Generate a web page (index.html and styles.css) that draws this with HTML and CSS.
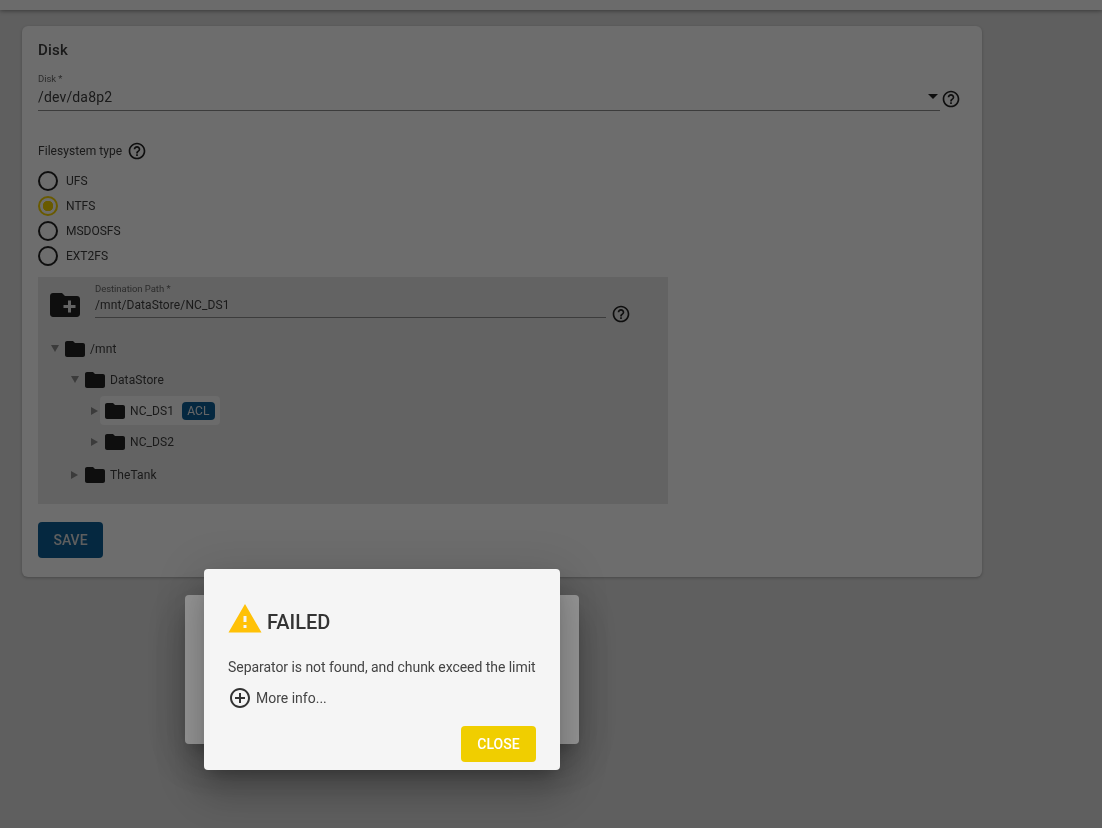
FILE: index.html
```html
<!DOCTYPE html>
<html lang="en">
<head>
<meta charset="utf-8">
<title>Disk</title>
<link rel="stylesheet" href="styles.css">
</head>
<body>
<svg class="defs" width="0" height="0" aria-hidden="true">
  <defs>
    <symbol id="help" viewBox="0 0 24 24"><path d="M11 18h2v-2h-2v2zm1-16C6.48 2 2 6.48 2 12s4.48 10 10 10 10-4.48 10-10S17.52 2 12 2zm0 18c-4.41 0-8-3.59-8-8s3.59-8 8-8 8 3.59 8 8-3.59 8-8 8zm0-14c-2.21 0-4 1.79-4 4h2c0-1.1.9-2 2-2s2 .9 2 2c0 2-3 1.75-3 5h2c0-2.25 3-2.5 3-5 0-2.21-1.79-4-4-4z"/></symbol>
    <symbol id="folder" viewBox="0 0 24 24"><path d="M10 4H4c-1.1 0-2 .9-2 2v12c0 1.1.9 2 2 2h16c1.1 0 2-.9 2-2V8c0-1.1-.9-2-2-2h-8l-2-2z"/></symbol>
  </defs>
</svg>
<header class="toolbar"></header>
<main class="content">
  <section class="card">
    <h2 class="card-title">Disk</h2>
    <div class="select-row">
      <div class="select-field">
        <label class="float-label">Disk *</label>
        <div class="select-value"><span>/dev/da8p2</span><i class="select-arrow"></i></div>
      </div>
      <svg class="help"><use href="#help"/></svg>
    </div>
    <div class="radio-title"><span>Filesystem type</span><svg class="help"><use href="#help"/></svg></div>
    <ul class="radios">
      <li class="radio"><i class="radio-dot"></i>UFS</li>
      <li class="radio radio-on"><i class="radio-dot"></i>NTFS</li>
      <li class="radio"><i class="radio-dot"></i>MSDOSFS</li>
      <li class="radio"><i class="radio-dot"></i>EXT2FS</li>
    </ul>
    <div class="explorer">
      <div class="path-row">
        <svg class="folder-add" viewBox="0 0 24 24"><path d="M20 6h-8l-2-2H4c-1.11 0-1.99.89-1.99 2L2 18c0 1.11.89 2 2 2h16c1.11 0 2-.89 2-2V8c0-1.11-.89-2-2-2zm-1 8h-3v3h-2v-3h-3v-2h3V9h2v3h3v2z"/></svg>
        <div class="path-field">
          <label class="float-label">Destination Path *</label>
          <div class="path-value">/mnt/DataStore/NC_DS1</div>
        </div>
        <svg class="help"><use href="#help"/></svg>
      </div>
      <ul class="tree">
        <li class="node level-0"><i class="caret caret-open"></i><svg class="folder"><use href="#folder"/></svg><span>/mnt</span></li>
        <li class="node level-1"><i class="caret caret-open"></i><svg class="folder"><use href="#folder"/></svg><span>DataStore</span></li>
        <li class="node level-2"><i class="caret"></i><div class="node-active"><svg class="folder"><use href="#folder"/></svg><span>NC_DS1</span><b class="acl">ACL</b></div></li>
        <li class="node level-2"><i class="caret"></i><div class="node-plain"><svg class="folder"><use href="#folder"/></svg><span>NC_DS2</span></div></li>
        <li class="node level-1 node-last"><i class="caret"></i><svg class="folder"><use href="#folder"/></svg><span>TheTank</span></li>
      </ul>
    </div>
    <button class="btn btn-save" type="button">SAVE</button>
  </section>
</main>
<div class="overlay overlay-one"></div>
<div class="dialog dialog-back"></div>
<div class="overlay overlay-two"></div>
<div class="dialog dialog-front">
  <div class="dialog-head">
    <svg class="warn" viewBox="0 0 24 24"><path d="M1 21h22L12 2 1 21zm12-3h-2v-2h2v2zm0-4h-2v-4h2v4z"/></svg>
    <h1 class="dialog-title">FAILED</h1>
  </div>
  <p class="dialog-msg">Separator is not found, and chunk exceed the limit</p>
  <div class="more">
    <svg class="more-icon" viewBox="0 0 24 24"><path d="M13 7h-2v4H7v2h4v4h2v-4h4v-2h-4V7zm-1-5C6.48 2 2 6.48 2 12s4.48 10 10 10 10-4.48 10-10S17.52 2 12 2zm0 18c-4.41 0-8-3.59-8-8s3.59-8 8-8 8 3.59 8 8-3.59 8-8 8z"/></svg>
    <span>More info...</span>
  </div>
  <div class="dialog-actions"><button class="btn btn-close" type="button">CLOSE</button></div>
</div>
</body>
</html>
```
FILE: styles.css
```css
* { box-sizing: border-box; }
html, body { height: 100%; }
body {
  margin: 0;
  background: #dadada;
  font-family: Roboto, "Liberation Sans", sans-serif;
  color: #3c3c3c;
  overflow: hidden;
}
.defs { position: absolute; }
ul { list-style: none; margin: 0; padding: 0; }
.toolbar {
  height: 10px;
  background: #f5f5f5;
  box-shadow: 0 1px 4px rgba(0,0,0,.4);
}
.content { padding: 16px 22px; will-change: transform; }
.card {
  width: 960px;
  height: 551px;
  padding: 16px;
  background: #fafafa;
  border-radius: 6px;
  box-shadow: 0 1px 3px rgba(0,0,0,.25);
}
.card-title {
  margin: 0;
  font-size: 15px;
  line-height: 16px;
  font-weight: 500;
  letter-spacing: .2px;
}
.select-row { display: flex; margin-top: 16px; }
.select-field { width: 902px; }
.float-label {
  display: block;
  font-size: 9.5px;
  line-height: 10px;
  letter-spacing: -.05px;
  color: #666;
}
.select-value {
  display: flex;
  align-items: center;
  justify-content: space-between;
  height: 27px;
  padding-right: 2px;
  border-bottom: 1px solid #8a8a8a;
  font-size: 14px;
  letter-spacing: .15px;
}
.select-arrow {
  width: 0;
  height: 0;
  margin-bottom: 2px;
  border: 5px solid transparent;
  border-top-color: #222;
  border-bottom-width: 0;
}
.help { width: 20px; height: 20px; fill: #222; flex: none; }
.select-row > .help { margin: 15px 0 0 1px; }
.radio-title {
  display: flex;
  align-items: center;
  gap: 5px;
  margin-top: 30px;
  height: 20px;
  font-size: 12px;
  letter-spacing: .05px;
}
.radios { margin-top: 7px; }
.radio {
  display: flex;
  align-items: center;
  height: 25px;
  gap: 8px;
  font-size: 12px;
}
.radio-dot {
  width: 20px;
  height: 20px;
  border: 2px solid #222;
  border-radius: 50%;
  flex: none;
}
.radio-on .radio-dot {
  border-color: #f0ce00;
  background: radial-gradient(circle, #f0ce00 0 5px, transparent 5.5px);
}
.explorer {
  width: 630px;
  height: 227px;
  margin-top: 9px;
  background: #e4e4e4;
}
.path-row { display: flex; align-items: flex-start; padding: 7px 0 0 9px; }
.folder-add { width: 36px; height: 36px; fill: #222; margin-top: 3px; flex: none; }
.path-field { width: 511px; margin-left: 12px; }
.path-value {
  height: 24px;
  line-height: 22px;
  border-bottom: 1px solid #8a8a8a;
  font-size: 12px;
  letter-spacing: .1px;
}
.path-row .help { margin: 20px 0 0 5px; }
.tree { padding-top: 9px; }
.node {
  display: flex;
  align-items: center;
  height: 31px;
  font-size: 12px;
  letter-spacing: .1px;
}
.node span { margin-left: 3px; }
.node.level-0 { padding-left: 13px; }
.node.level-1 { padding-left: 33px; }
.node.level-2 { padding-left: 53px; }
.node-last { margin-top: 2px; }
.caret {
  width: 0;
  height: 0;
  flex: none;
  margin-right: 5px;
  border-style: solid;
  border-width: 4px 0 4px 7px;
  border-color: transparent transparent transparent #888;
}
.caret-open {
  margin-right: 4px;
  border-width: 7px 4px 0 4px;
  border-color: #888 transparent transparent transparent;
}
.folder { width: 24px; height: 24px; fill: #222; flex: none; }
.node-active, .node-plain { display: flex; align-items: center; height: 29px; padding-right: 5px; border-radius: 4px; margin-left: -3px; padding-left: 3px; }
.node-active { background: #f5f5f5; }
.acl {
  margin-left: 8px;
  padding: 0 5px;
  height: 18px;
  line-height: 18px;
  border-radius: 4px;
  background: #0d5d94;
  color: #e8e8e8;
  font-weight: 400;
  font-size: 12px;
  letter-spacing: .2px;
}
.btn {
  display: block;
  border: 0;
  height: 36px;
  border-radius: 4px;
  font-family: inherit;
  font-size: 14px;
  font-weight: 500;
  padding: 0;
}
.btn-save {
  width: 65px;
  margin-top: 18px;
  background: #0d5d94;
  color: #d8d8d8;
}
.overlay { position: fixed; inset: 0; }
.overlay-one { background: rgba(0,0,0,.29); }
.overlay-two { background: rgba(0,0,0,.39); }
.dialog {
  position: fixed;
  background: #f5f5f5;
  border-radius: 4px;
  box-shadow: 0 11px 15px -7px rgba(0,0,0,.2), 0 24px 38px 3px rgba(0,0,0,.14), 0 9px 46px 8px rgba(0,0,0,.12);
}
.dialog-back { left: 185px; top: 595px; width: 394px; height: 149px; }
.dialog-front {
  left: 204px;
  top: 569px;
  width: 356px;
  height: 201px;
  padding: 31px 24px 8px;
  will-change: transform;
}
.dialog-head { display: flex; align-items: center; height: 38px; }
.warn { width: 36px; height: 36px; fill: #ffc107; flex: none; margin-left: -1px; }
.dialog-title {
  margin: 5px 0 0 4px;
  font-size: 20px;
  font-weight: 500;
  color: #333;
  line-height: 38px;
}
.dialog-msg {
  margin: 19px 0 0;
  font-size: 14px;
  line-height: 20px;
  color: #444;
  white-space: nowrap;
  letter-spacing: -.05px;
}
.more {
  display: flex;
  align-items: center;
  gap: 4px;
  height: 24px;
  margin-top: 9px;
  font-size: 14px;
  color: #444;
}
.more-icon { width: 24px; height: 24px; fill: #333; flex: none; }
.dialog-actions { display: flex; justify-content: flex-end; margin-top: 16px; }
.btn-close { width: 75px; background: #f0ce00; color: #fff; }
```
